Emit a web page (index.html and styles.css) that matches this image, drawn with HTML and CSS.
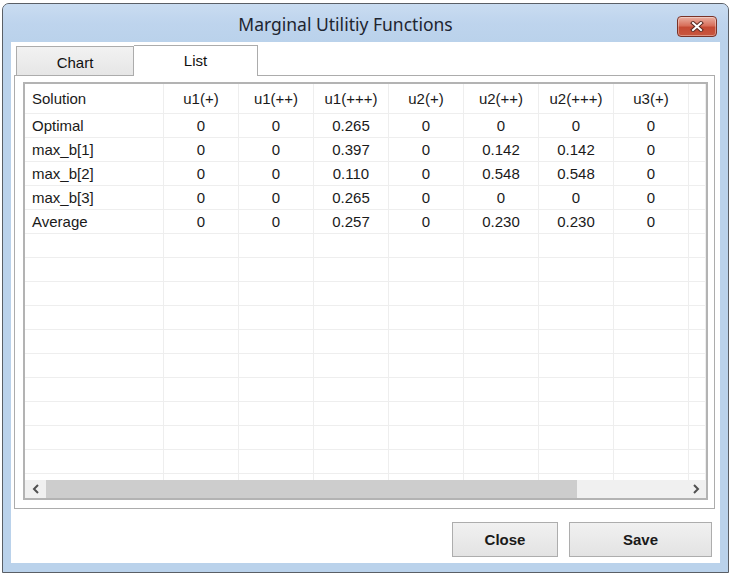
FILE: index.html
```html
<!DOCTYPE html>
<html>
<head>
<meta charset="utf-8">
<link rel="stylesheet" href="styles.css">
</head>
<body>
<div class="window">
  <div class="titlebar">
    <span class="title">Marginal Utilitiy Functions</span>
    <button class="xbtn" aria-label="Close">
      <svg width="14" height="11" viewBox="0 0 14 11">
        <path d="M3 2 L11 9 M11 2 L3 9" stroke="#5a2a22" stroke-width="4" stroke-linecap="square"/>
        <path d="M3 2 L11 9 M11 2 L3 9" stroke="#ffffff" stroke-width="2" stroke-linecap="square"/>
      </svg>
    </button>
  </div>
  <div class="frame">
    <div class="content">
      <div class="tabs">
        <div class="tab">Chart</div>
        <div class="tab active">List</div>
      </div>
      <div class="panel">
        <div class="table">
          <div class="rows">
            <div class="row head">
              <div class="cell first">Solution</div><div class="cell">u1(+)</div><div class="cell">u1(++)</div><div class="cell">u1(+++)</div><div class="cell">u2(+)</div><div class="cell">u2(++)</div><div class="cell">u2(+++)</div><div class="cell">u3(+)</div><div class="cell"></div>
            </div>
            <div class="row">
              <div class="cell first">Optimal</div><div class="cell">0</div><div class="cell">0</div><div class="cell">0.265</div><div class="cell">0</div><div class="cell">0</div><div class="cell">0</div><div class="cell">0</div><div class="cell"></div>
            </div>
            <div class="row">
              <div class="cell first">max_b[1]</div><div class="cell">0</div><div class="cell">0</div><div class="cell">0.397</div><div class="cell">0</div><div class="cell">0.142</div><div class="cell">0.142</div><div class="cell">0</div><div class="cell"></div>
            </div>
            <div class="row">
              <div class="cell first">max_b[2]</div><div class="cell">0</div><div class="cell">0</div><div class="cell">0.110</div><div class="cell">0</div><div class="cell">0.548</div><div class="cell">0.548</div><div class="cell">0</div><div class="cell"></div>
            </div>
            <div class="row">
              <div class="cell first">max_b[3]</div><div class="cell">0</div><div class="cell">0</div><div class="cell">0.265</div><div class="cell">0</div><div class="cell">0</div><div class="cell">0</div><div class="cell">0</div><div class="cell"></div>
            </div>
            <div class="row">
              <div class="cell first">Average</div><div class="cell">0</div><div class="cell">0</div><div class="cell">0.257</div><div class="cell">0</div><div class="cell">0.230</div><div class="cell">0.230</div><div class="cell">0</div><div class="cell"></div>
            </div>
            <div class="row"><div class="cell"></div><div class="cell"></div><div class="cell"></div><div class="cell"></div><div class="cell"></div><div class="cell"></div><div class="cell"></div><div class="cell"></div><div class="cell"></div></div>
            <div class="row"><div class="cell"></div><div class="cell"></div><div class="cell"></div><div class="cell"></div><div class="cell"></div><div class="cell"></div><div class="cell"></div><div class="cell"></div><div class="cell"></div></div>
            <div class="row"><div class="cell"></div><div class="cell"></div><div class="cell"></div><div class="cell"></div><div class="cell"></div><div class="cell"></div><div class="cell"></div><div class="cell"></div><div class="cell"></div></div>
            <div class="row"><div class="cell"></div><div class="cell"></div><div class="cell"></div><div class="cell"></div><div class="cell"></div><div class="cell"></div><div class="cell"></div><div class="cell"></div><div class="cell"></div></div>
            <div class="row"><div class="cell"></div><div class="cell"></div><div class="cell"></div><div class="cell"></div><div class="cell"></div><div class="cell"></div><div class="cell"></div><div class="cell"></div><div class="cell"></div></div>
            <div class="row"><div class="cell"></div><div class="cell"></div><div class="cell"></div><div class="cell"></div><div class="cell"></div><div class="cell"></div><div class="cell"></div><div class="cell"></div><div class="cell"></div></div>
            <div class="row"><div class="cell"></div><div class="cell"></div><div class="cell"></div><div class="cell"></div><div class="cell"></div><div class="cell"></div><div class="cell"></div><div class="cell"></div><div class="cell"></div></div>
            <div class="row"><div class="cell"></div><div class="cell"></div><div class="cell"></div><div class="cell"></div><div class="cell"></div><div class="cell"></div><div class="cell"></div><div class="cell"></div><div class="cell"></div></div>
            <div class="row"><div class="cell"></div><div class="cell"></div><div class="cell"></div><div class="cell"></div><div class="cell"></div><div class="cell"></div><div class="cell"></div><div class="cell"></div><div class="cell"></div></div>
            <div class="row"><div class="cell"></div><div class="cell"></div><div class="cell"></div><div class="cell"></div><div class="cell"></div><div class="cell"></div><div class="cell"></div><div class="cell"></div><div class="cell"></div></div>
            <div class="row"><div class="cell"></div><div class="cell"></div><div class="cell"></div><div class="cell"></div><div class="cell"></div><div class="cell"></div><div class="cell"></div><div class="cell"></div><div class="cell"></div></div>
          </div>
          <div class="hscroll">
            <div class="arrow">
              <svg width="8" height="10" viewBox="0 0 8 10"><path d="M6 1 L2 5 L6 9" fill="none" stroke="#505050" stroke-width="2"/></svg>
            </div>
            <div class="thumb"></div>
            <div class="track"></div>
            <div class="arrow">
              <svg width="8" height="10" viewBox="0 0 8 10"><path d="M2 1 L6 5 L2 9" fill="none" stroke="#505050" stroke-width="2"/></svg>
            </div>
          </div>
        </div>
      </div>
      <div class="buttons">
        <button class="btn close">Close</button>
        <button class="btn save">Save</button>
      </div>
    </div>
  </div>
</div>
</body>
</html>
```

FILE: styles.css
```css
html, body {
  margin: 0;
  padding: 0;
  background: #ffffff;
}
body {
  padding: 3px 0 0 2px;
  width: 731px;
  height: 575px;
  box-sizing: border-box;
  overflow: hidden;
  font-family: "Liberation Sans", Arial, sans-serif;
}
.window {
  width: 727px;
  height: 570px;
  box-sizing: border-box;
  border: 1px solid #5a5f66;
  border-radius: 7px 7px 0 0;
  background: #bad2eb;
  display: flex;
  flex-direction: column;
  overflow: hidden;
}
.titlebar {
  height: 38px;
  flex: none;
  display: flex;
  align-items: center;
  justify-content: center;
  position: relative;
  background: linear-gradient(#c9dcf1, #bed4ed 50%, #bad2eb);
}
.title {
  font-family: "Noto Sans", "Open Sans", sans-serif;
  font-size: 17.5px;
  color: #1e2530;
  margin-top: 1px;
  margin-right: 40px;
}
.xbtn {
  position: absolute;
  right: 11px;
  top: 12px;
  width: 40px;
  height: 21px;
  padding: 0;
  border: 1px solid #7a3328;
  border-radius: 4px;
  background: linear-gradient(#eab0a2, #d8705c 45%, #c54a34 55%, #c8573f);
  display: flex;
  align-items: center;
  justify-content: center;
  box-shadow: inset 0 0 0 1px rgba(255,255,255,0.35);
}
.frame {
  flex: 1;
  padding: 0 8px 9px 8px;
  display: flex;
}
.content {
  flex: 1;
  background: #ffffff;
  display: flex;
  flex-direction: column;
}
.tabs {
  height: 33px;
  display: flex;
  align-items: flex-end;
  padding-left: 5px;
  flex: none;
}
.tab {
  width: 118px;
  height: 29px;
  box-sizing: border-box;
  border: 1px solid #acacac;
  border-bottom: none;
  background: linear-gradient(#f2f2f2, #e6e6e6);
  font-size: 15px;
  color: #111;
  display: flex;
  align-items: center;
  justify-content: center;
  padding-top: 2px;
}
.tab.active {
  width: 124px;
  height: 31px;
  background: #ffffff;
  border-left: none;
  padding-top: 0;
  padding-bottom: 2px;
  margin-bottom: -1px;
  position: relative;
  z-index: 1;
}
.panel {
  height: 434px;
  box-sizing: border-box;
  margin: 0 5px 0 3px;
  border: 1px solid #acacac;
  padding: 6px 6px 8px 8px;
  flex: none;
  display: flex;
}
.table {
  flex: 1;
  border: 2px solid #b3b3b3;
  display: flex;
  flex-direction: column;
  overflow: hidden;
}
.rows {
  flex: 1;
  overflow: hidden;
}
.row {
  display: grid;
  grid-template-columns: 139px repeat(7, 75px) 1fr;
  height: 24px;
}
.row.head {
  height: 30px;
}
.cell {
  border-right: 1px solid #eeeeee;
  border-bottom: 1px solid #eeeeee;
  font-size: 15px;
  color: #1a1a1a;
  display: flex;
  align-items: center;
  justify-content: center;
  white-space: nowrap;
  overflow: hidden;
}
.cell.first {
  justify-content: flex-start;
  padding-left: 7px;
}
.hscroll {
  height: 18px;
  flex: none;
  display: flex;
  background: #f0f0f0;
}
.arrow {
  width: 21px;
  display: flex;
  align-items: center;
  justify-content: center;
}
.thumb {
  width: 531px;
  background: #cdcdcd;
}
.track {
  flex: 1;
}
.buttons {
  display: flex;
  justify-content: flex-end;
  gap: 11px;
  padding: 13px 8px 0 0;
}
.btn {
  height: 35px;
  border: 1px solid #adadad;
  background: linear-gradient(#f1f1f1, #e3e3e3);
  font-family: "Liberation Sans", Arial, sans-serif;
  font-weight: bold;
  font-size: 15px;
  color: #1a1a1a;
  padding: 0;
}
.btn.close {
  width: 106px;
}
.btn.save {
  width: 143px;
}
```
